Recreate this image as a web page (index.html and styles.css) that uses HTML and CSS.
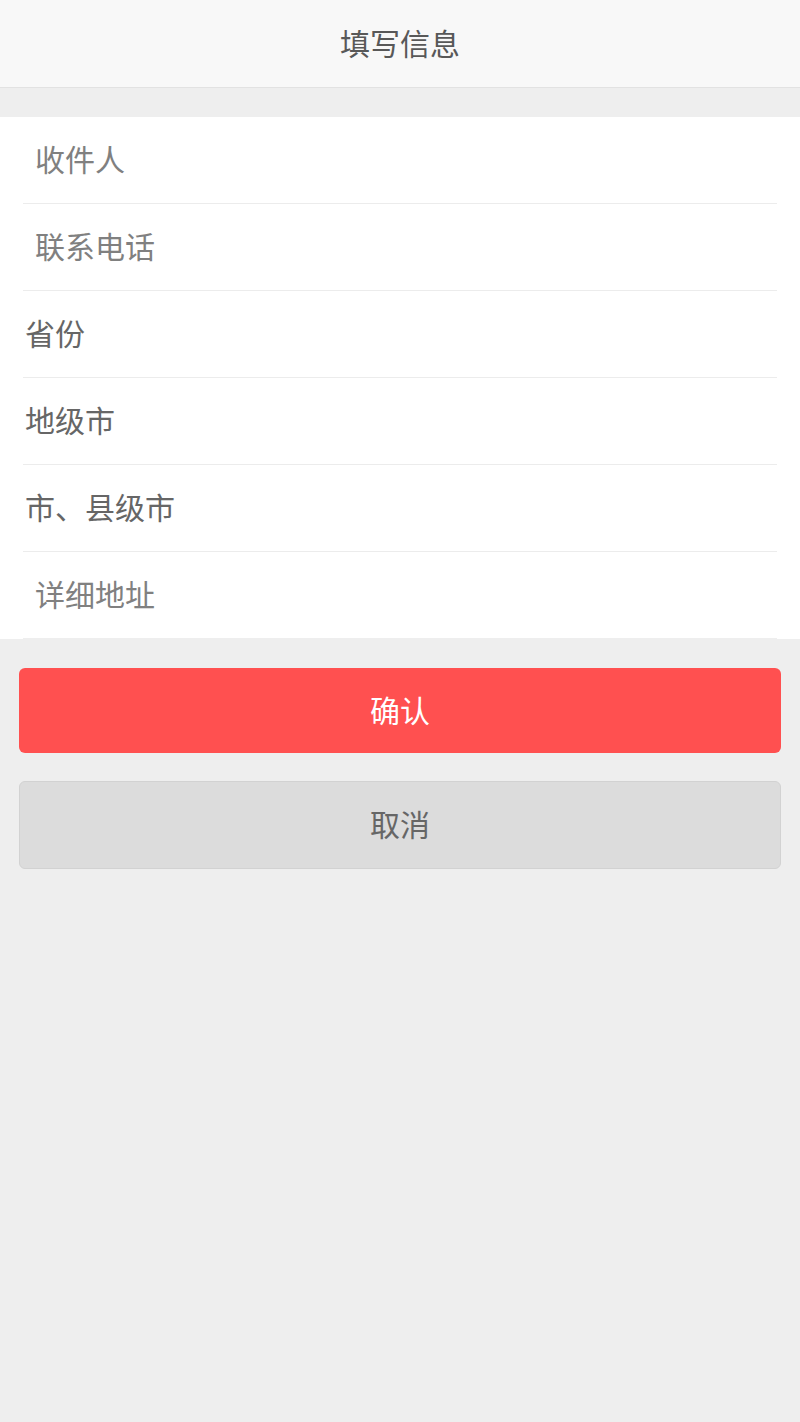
FILE: index.html
```html
<!DOCTYPE html>
<html lang="zh-CN">
<head>
<meta charset="utf-8">
<title>填写信息</title>
<link rel="stylesheet" href="styles.css">
</head>
<body>
<header class="topbar">填写信息</header>
<div class="spacer"></div>
<section class="form">
  <div class="row input">收件人</div>
  <div class="row input">联系电话</div>
  <div class="row select">省份</div>
  <div class="row select">地级市</div>
  <div class="row select">市、县级市</div>
  <div class="row input">详细地址</div>
</section>
<div class="actions">
  <button class="btn confirm">确认</button>
  <button class="btn cancel">取消</button>
</div>
</body>
</html>
```
FILE: styles.css
```css
html, body {
  margin: 0;
  padding: 0;
}
body {
  background: #eeeeee;
  font-family: "Noto Sans CJK SC", "Noto Sans", sans-serif;
  min-height: 1422px;
}
.topbar {
  height: 88px;
  box-sizing: border-box;
  padding-bottom: 4px;
  background: #f8f8f8;
  border-bottom: 1px solid #e2e2e2;
  display: flex;
  align-items: center;
  justify-content: center;
  font-size: 30px;
  color: #585858;
}
.spacer {
  height: 29px;
}
.form {
  background: #ffffff;
  padding-left: 23px;
  padding-right: 23px;
}
.row {
  height: 87px;
  box-sizing: border-box;
  padding-bottom: 4px;
  border-bottom: 1px solid #ececec;
  display: flex;
  align-items: center;
  font-size: 30px;
  line-height: 1;
}
.row.input {
  padding-left: 12px;
  color: #808080;
}
.row.select {
  padding-left: 2px;
  color: #666666;
}
.row:last-child {
  border-bottom-color: #eeeeee;
}
.actions {
  padding: 29px 19px 0;
  display: flex;
  flex-direction: column;
  gap: 28px;
}
.btn {
  display: flex;
  align-items: center;
  justify-content: center;
  width: 100%;
  box-sizing: border-box;
  font-family: inherit;
  font-size: 30px;
  line-height: 1;
  border-radius: 6px;
  padding: 0 0 4px;
  cursor: pointer;
}
.confirm {
  height: 85px;
  background: #ff5050;
  color: #ffffff;
  border: none;
}
.cancel {
  height: 88px;
  background: #dcdcdc;
  color: #666666;
  border: 1px solid #d2d2d2;
}
```
